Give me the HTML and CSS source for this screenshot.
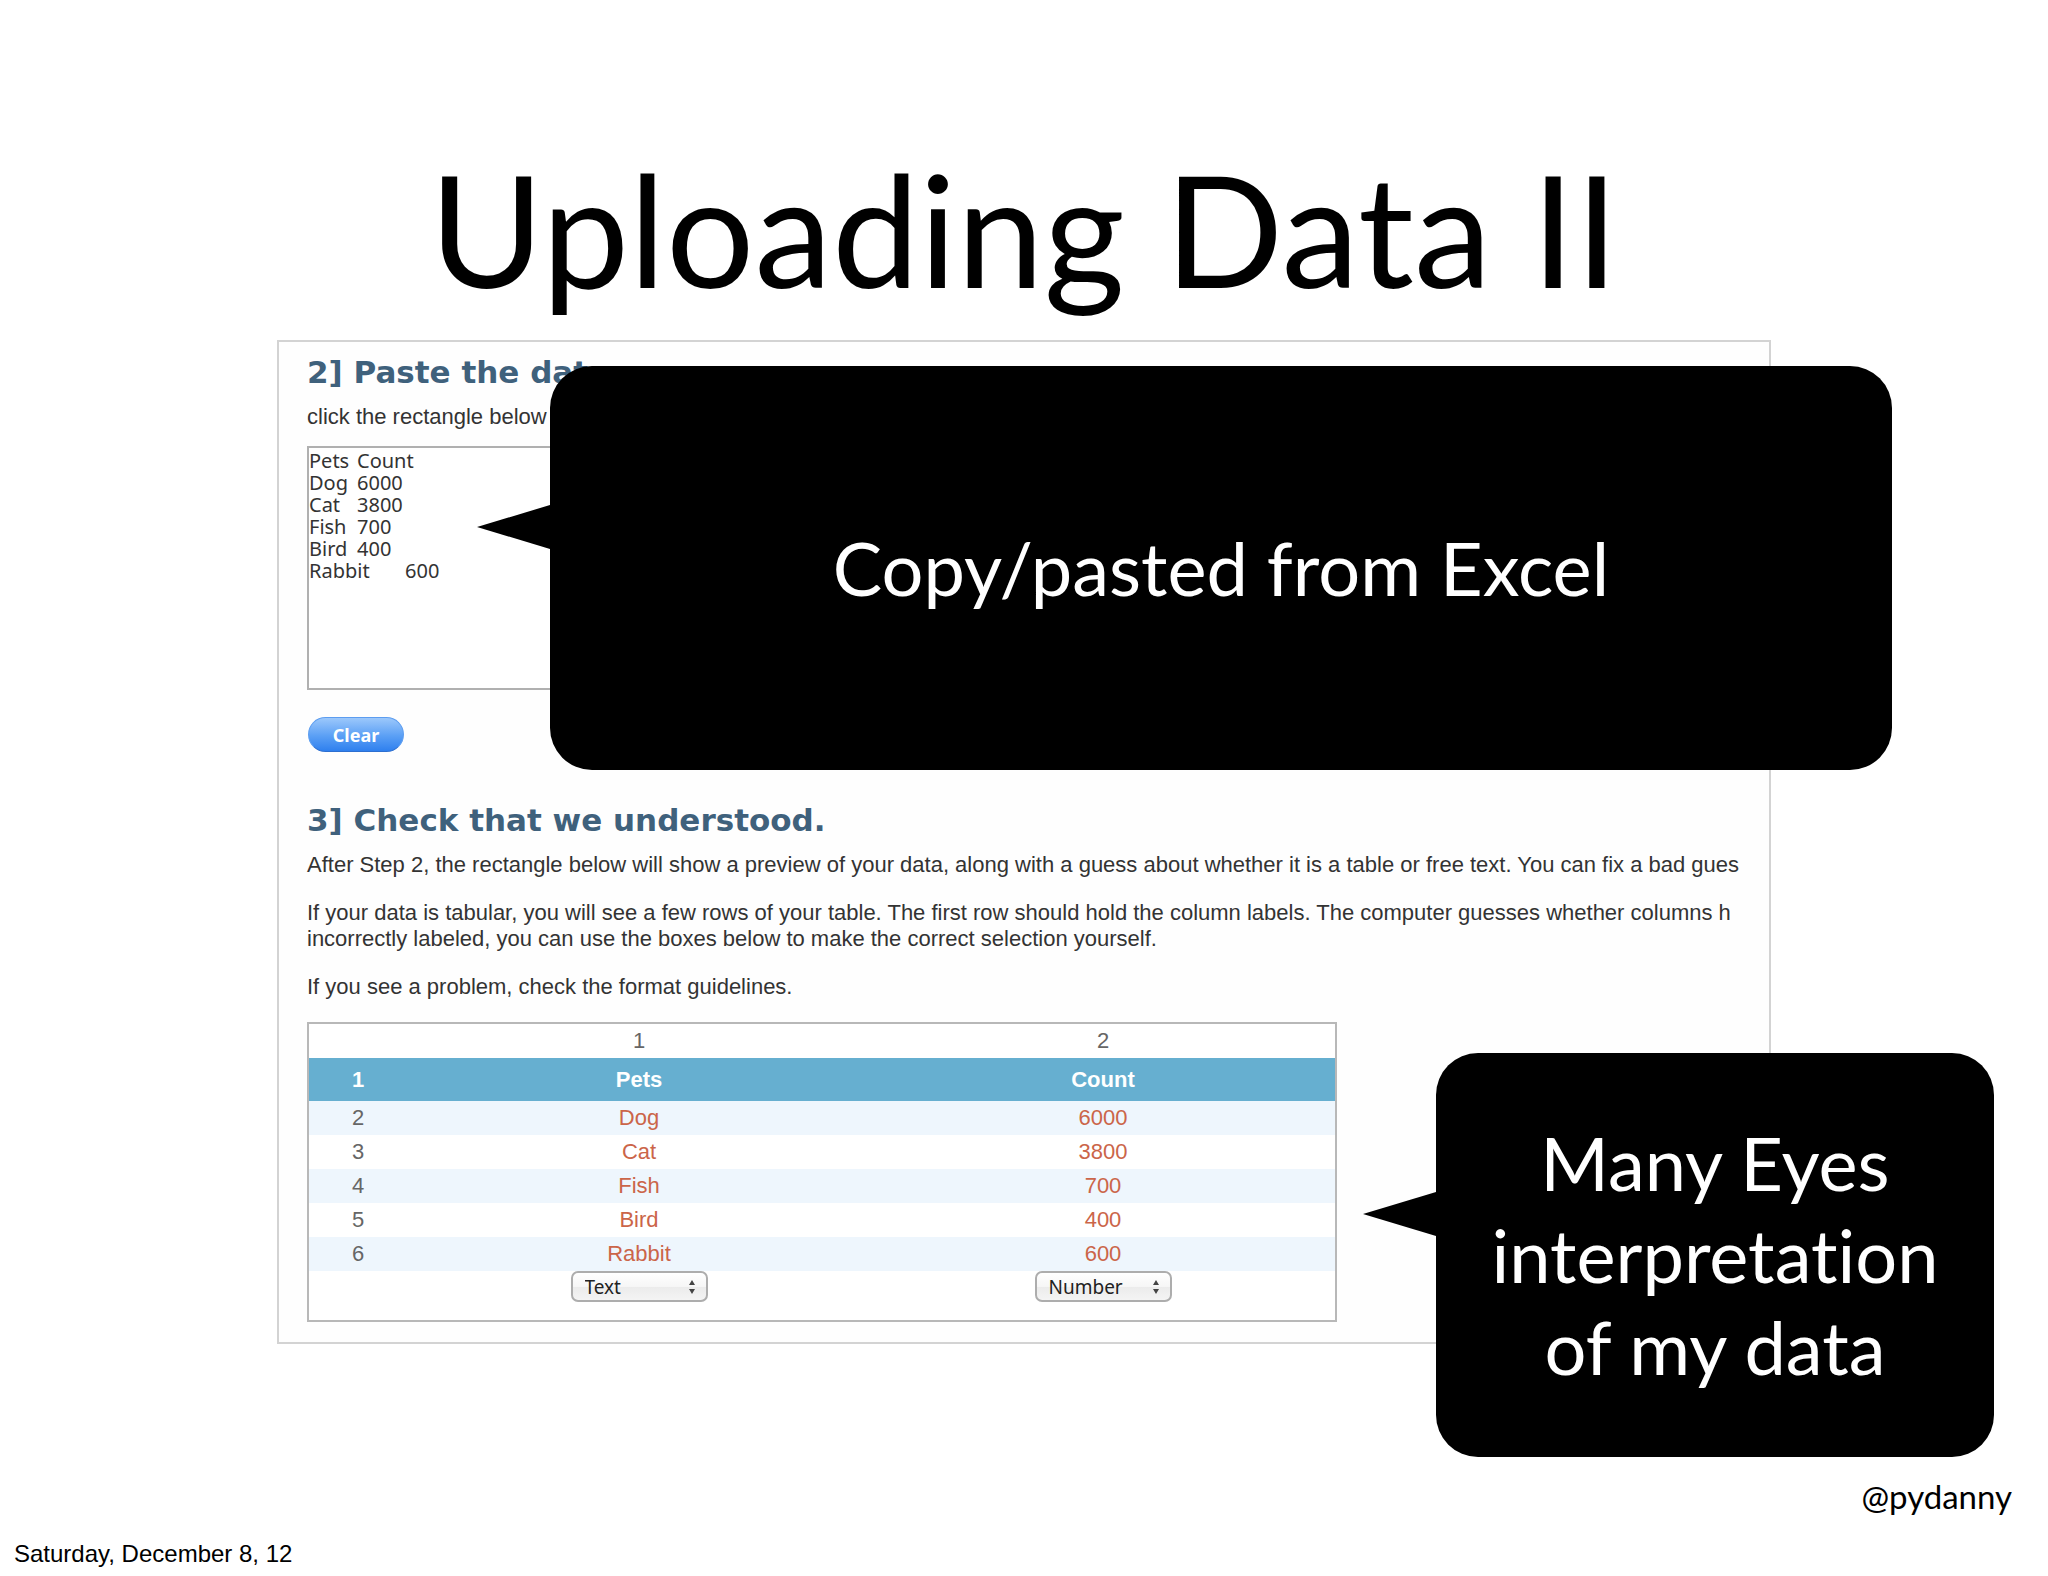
FILE: index.html
```html
<!DOCTYPE html>
<html lang="en">
<head>
  <meta charset="UTF-8">
  <title>Uploading Data II</title>
  <link rel="stylesheet" href="styles.css">
</head>
<body>

  <main class="slide">
    <h1 class="slide-title">Uploading Data II</h1>

    <div class="stage">
      <div class="panel">
        <section class="step">
          <h2>2] Paste the data:</h2>
          <label for="paste-data">click the rectangle below</label>
          <textarea id="paste-data" spellcheck="false">
Pets&#9;Count
Dog&#9;6000
Cat&#9;3800
Fish&#9;700
Bird&#9;400
Rabbit&#9;600</textarea>
          <button type="button" class="clear-btn">Clear</button>
        </section>

        <section class="step">
          <h2>3] Check that we understood.</h2>
          <p>After Step 2, the rectangle below will show a preview of your data, along with a guess about whether it is a table or free text. You can fix a bad gues</p>
          <p>If your data is tabular, you will see a few rows of your table. The first row should hold the column labels. The computer guesses whether columns h<br>
          incorrectly labeled, you can use the boxes below to make the correct selection yourself.</p>
          <p>If you see a problem, check the format guidelines.</p>

          <table class="preview">
            <thead>
              <tr class="col-numbers"><td class="row-number"></td><td>1</td><td>2</td></tr>
              <tr class="labels"><th>1</th><th>Pets</th><th>Count</th></tr>
            </thead>
            <tbody>
              <tr><th>2</th><td>Dog</td><td>6000</td></tr>
              <tr><th>3</th><td>Cat</td><td>3800</td></tr>
              <tr><th>4</th><td>Fish</td><td>700</td></tr>
              <tr><th>5</th><td>Bird</td><td>400</td></tr>
              <tr><th>6</th><td>Rabbit</td><td>600</td></tr>
            </tbody>
            <tfoot>
              <tr>
                <td></td>
                <td>
                  <span class="select-wrap">
                    <select aria-label="Column 1 type">
                      <option selected>Text</option>
                      <option>Number</option>
                    </select>
                    <svg viewBox="0 0 8 16" aria-hidden="true"><path d="M4 1 7 6H1zM4 15 1 10h6z"/></svg>
                  </span>
                </td>
                <td>
                  <span class="select-wrap">
                    <select aria-label="Column 2 type">
                      <option>Text</option>
                      <option selected>Number</option>
                    </select>
                    <svg viewBox="0 0 8 16" aria-hidden="true"><path d="M4 1 7 6H1zM4 15 1 10h6z"/></svg>
                  </span>
                </td>
              </tr>
            </tfoot>
          </table>
        </section>
      </div>

      <div class="callout callout-paste">Copy/pasted from Excel</div>
      <div class="callout callout-result">Many Eyes<br>interpretation<br>of my data</div>
    </div>

    <footer>
      <div class="handle">@pydanny</div>
      <div class="date">Saturday, December 8, 12</div>
    </footer>
  </main>

</body>
</html>
```

FILE: styles.css
```css
body {
  margin: 0;
  background: #fff;
  color: #000;
  font-family: "Liberation Sans", Arial, sans-serif;
}

.slide {
  overflow: hidden;
}

.slide-title {
  margin: 0;
  padding-top: 132px;
  height: 208px;
  font: 400 156px/192px Lato, sans-serif;
  text-align: center;
}

.stage {
  position: relative;
  margin: 0 277px;
}

.panel {
  overflow: hidden;
  padding: 12px 0 20px 28px;
  border: 2px solid #d3d3d3;
  background: #fefefe;
  color: #333;
  font-size: 22px;
  line-height: 26px;
  white-space: nowrap;
}

.step h2 {
  margin: 0 0 14px;
  color: #3f617c;
  font: bold 31px/36px "DejaVu Sans", Verdana, sans-serif;
}

.step p {
  margin: 0 0 22px;
}

.step label {
  display: block;
  margin-bottom: 16px;
}

.step textarea {
  display: block;
  box-sizing: border-box;
  width: 70%;
  height: 244px;
  padding: 2px 0;
  border: 2px solid #b0b0b0;
  background: #fff;
  color: #333;
  font: 20px/22px "Noto Sans", sans-serif;
  tab-size: 48px;
  resize: none;
}

.clear-btn {
  display: block;
  width: 96px;
  height: 35px;
  margin: 27px 0 50px 1px;
  padding: 0;
  border: 1px solid #5c9df0;
  border-bottom-color: #2d6fd0;
  border-radius: 18px;
  background: linear-gradient(#9cc8fb, #5a9ff5 55%, #2f80ee);
  color: #fff;
  font: bold 18px/30px "Noto Sans", sans-serif;
}

.preview {
  width: 1030px;
  border: 2px solid #b8b8b8;
  border-collapse: separate;
  border-spacing: 0;
  table-layout: fixed;
  background: #fff;
  text-align: center;
}

.preview th,
.preview td {
  height: 34px;
  padding: 0;
}

.preview .row-number {
  width: 98px;
}

.preview tbody th,
.preview .col-numbers td {
  color: #666;
  font-weight: normal;
}

.preview .labels th {
  height: 43px;
  background: #66afd0;
  color: #fff;
}

.preview tbody td {
  color: #cb6549;
}

.preview tbody tr:nth-child(odd) {
  background: #eef6fd;
}

.preview tfoot td {
  height: 49px;
  vertical-align: top;
}

.select-wrap {
  display: inline-block;
  position: relative;
  width: 137px;
  height: 31px;
}

.select-wrap select {
  appearance: none;
  display: block;
  width: 100%;
  height: 100%;
  padding: 0 12px;
  border: 2px solid #adadad;
  border-radius: 7px;
  background: linear-gradient(#fff, #f6f6f6 50%, #ebebeb 51%, #f4f4f4);
  color: #222;
  font: 19px/26px "Noto Sans", sans-serif;
}

.select-wrap svg {
  position: absolute;
  top: 8px;
  right: 12px;
  width: 8px;
  height: 16px;
  fill: #444;
  pointer-events: none;
}

/* speech bubbles lie over the panel */
.callout {
  position: absolute;
  display: flex;
  align-items: center;
  justify-content: center;
  height: 404px;
  border-radius: 42px;
  background: #000;
  color: #fff;
  font: 74px/92px Lato, sans-serif;
  font-variant-ligatures: none;
  text-align: center;
}

.callout::before {
  content: "";
  position: absolute;
  top: 139px;
  right: 100%;
  width: 73px;
  height: 44px;
  background: #000;
  clip-path: polygon(0 50%, 100% 0, 100% 100%);
}

.callout-paste {
  top: 26px;
  left: 273px;
  right: -121px;
}

.callout-result {
  top: 713px;
  right: -223px;
  width: 558px;
}

footer {
  padding: 132px 36px 0 14px;
}

.handle {
  font: 33px/40px Lato, sans-serif;
  text-align: right;
}

.date {
  margin-top: 22px;
  font-size: 24px;
  line-height: 32px;
}
```
